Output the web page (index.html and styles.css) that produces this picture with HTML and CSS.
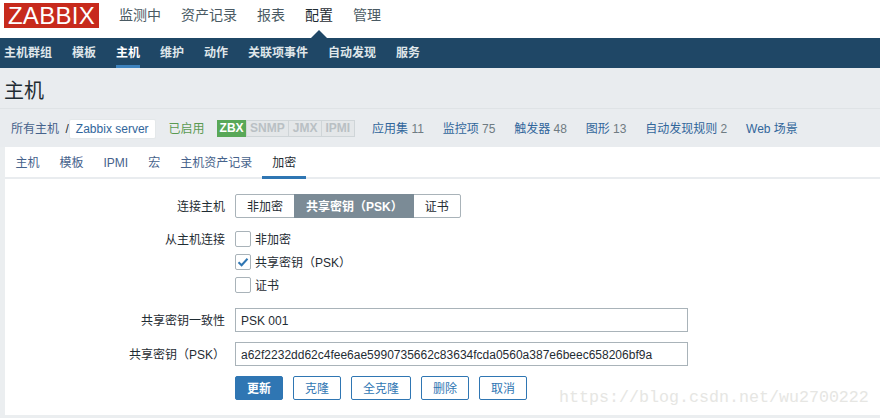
FILE: index.html
```html
<!DOCTYPE html>
<html lang="zh">
<head>
<meta charset="utf-8">
<title>Zabbix</title>
<link rel="stylesheet" href="styles.css">
</head>
<body>
<header class="topbar">
  <div class="logo">ZABBIX</div>
  <nav class="mainnav">
    <a>监测中</a><a>资产记录</a><a>报表</a><a class="on">配置</a><a>管理</a>
  </nav>
</header>
<nav class="subnav">
  <a>主机群组</a><a>模板</a><a class="on">主机</a><a>维护</a><a>动作</a><a>关联项事件</a><a>自动发现</a><a>服务</a>
</nav>
<h1 class="title">主机</h1>
<div class="crumbs">
  <a class="all">所有主机</a><span class="sep">/</span><a class="cur">Zabbix server</a>
  <span class="enabled">已启用</span>
  <div class="badges"><span class="b zbx">ZBX</span><span class="b">SNMP</span><span class="b">JMX</span><span class="b">IPMI</span></div>
  <a class="lnk first">应用集 <i>11</i></a><a class="lnk">监控项 <i>75</i></a><a class="lnk">触发器 <i>48</i></a><a class="lnk">图形 <i>13</i></a><a class="lnk">自动发现规则 <i>2</i></a><a class="lnk">Web 场景</a>
</div>
<main class="panel">
  <div class="tabs">
    <a>主机</a><a>模板</a><a>IPMI</a><a>宏</a><a>主机资产记录</a><a class="on">加密</a>
  </div>
  <form class="form">
    <div class="row r-conn">
      <label class="lab">连接主机</label>
      <div class="seg"><span>非加密</span><span class="sel">共享密钥（PSK）</span><span>证书</span></div>
    </div>
    <div class="row r-from">
      <label class="lab">从主机连接</label>
      <div class="checks">
        <div class="chk"><span class="box"></span>非加密</div>
        <div class="chk"><span class="box"><svg width="14" height="14" viewBox="0 0 14 14"><path d="M2.5 7.2 5.6 10.2 11.5 3.8" fill="none" stroke="#2f76b3" stroke-width="2"/></svg></span>共享密钥（PSK）</div>
        <div class="chk"><span class="box"></span>证书</div>
      </div>
    </div>
    <div class="row r-id">
      <label class="lab">共享密钥一致性</label>
      <div class="input">PSK 001</div>
    </div>
    <div class="row r-key">
      <label class="lab">共享密钥（PSK）</label>
      <div class="input">a62f2232dd62c4fee6ae5990735662c83634fcda0560a387e6beec658206bf9a</div>
    </div>
    <div class="row r-btn">
      <span class="lab"></span>
      <div class="btns"><span class="btn pri">更新</span><span class="btn">克隆</span><span class="btn w">全克隆</span><span class="btn">删除</span><span class="btn">取消</span></div>
    </div>
  </form>
  <div class="mark">https://blog.csdn.net/wu2700222</div>
</main>
</body>
</html>
```
FILE: styles.css
```css
* { box-sizing: border-box; }
html, body { margin: 0; height: 418px; overflow: hidden; }
body {
  background: #ebeef0;
  font: 12px/14px "Liberation Sans", "Noto Sans CJK SC", sans-serif;
  color: #1f2c33;
}
.topbar { height: 38px; background: #fff; display: flex; align-items: flex-start; }
.logo {
  margin: 3px 0 0 4px; width: 95px; height: 25px; background: #c72a1c; color: #fff;
  font-size: 24px; line-height: 26px; text-align: center; letter-spacing: .3px;
}
.mainnav { display: flex; gap: 20px; margin-left: 20px; padding-top: 7px; font-size: 14px; line-height: 16px; color: #4a5a63; }
.mainnav a { position: relative; }
.mainnav .on { color: #1f2c33; }
.mainnav .on::after {
  content: ""; position: absolute; left: 6px; top: 23px; border: 8px solid transparent;
  border-top: 0; border-bottom-color: #1f4766;
}
.subnav { height: 30px; background: #1f4766; display: flex; gap: 20px; padding-left: 4px; color: #dfe6ea; font-weight: 700; line-height: 30px; }
.subnav a { height: 30px; }
.subnav .on { color: #fff; box-shadow: inset 0 -3px 0 #3d82bd; }
.title { margin: 0; height: 41px; padding: 11px 0 0 4px; font-size: 20px; line-height: 24px; font-weight: 400; color: #1f2c33; border-bottom: 1px solid #dfe3e6; background: #e9ecef; }
.crumbs { height: 38px; display: flex; align-items: center; padding: 1px 0 0 11px; color: #31669b; background: #e9ecef; }
.crumbs .all { color: #46628b; }
.sep { margin: 0 0 0 6.5px; color: #1f2c33; }
.cur { background: #fff; border: 1px solid #e4e8ea; border-radius: 2px; padding: 2px 6px; height: 20px; }
.enabled { color: #5a9a52; margin-left: 13px; }
.badges { display: flex; margin-left: 12px; height: 17px; }
.b { border: 1px solid #cfd5d8; background: #e4e7e9; color: #b9c0c4; font-weight: 700; font-size: 12px; line-height: 15px; padding: 0 3.5px; margin-left: -1px; }
.b:first-child { margin-left: 0; }
.b.zbx { background: #59a858; border-color: #59a858; color: #fff; padding: 0 2px; }
.lnk { margin-left: 18.8px; }
.lnk.first { margin-left: 17.5px; }
.lnk i { font-style: normal; color: #6f7b82; }
.panel { position: relative; margin-left: 5px; height: 268px; background: #fff; }
.tabs { height: 32px; display: flex; gap: 20px; padding-left: 10.5px; border-bottom: 2px solid #e9ecef; line-height: 33px; color: #46628b; }
.tabs a { height: 32px; }
.tabs .on { color: #1f2c33; position: relative; }
.tabs .on::after { content: ""; position: absolute; left: -10px; right: -10px; bottom: 0; height: 3px; background: #2f76b3; }
.form { padding-top: 15px; }
.row { display: flex; gap: 10px; }
.lab { width: 220px; height: 24px; text-align: right; flex: none; color: #1f2c33; line-height: 26px; }
.seg { display: flex; height: 24px; border: 1px solid #a9b3b9; border-radius: 2px; line-height: 24px; }
.seg span { padding: 0 11px; }
.seg .sel { background: #7b8b96; color: #fff; font-weight: 700; margin: -1px 0; padding: 0 11px 0 12px; line-height: 26px; height: 24px; }
.r-from { margin-top: 13px; }
.r-from .lab { height: 16px; line-height: 18px; }
.checks { display: flex; flex-direction: column; gap: 7px; }
.chk { display: flex; align-items: flex-start; gap: 4px; height: 16px; line-height: 18px; }
.box { width: 16px; height: 16px; border: 1px solid #a9b3b9; border-radius: 2px; display: block; }
.box svg { display: block; }
.r-id { margin-top: 15px; }
.r-key { margin-top: 10px; }
.input { width: 453px; height: 24px; border: 1px solid #a9b3b9; padding: 0 5px; line-height: 24px; color: #1f2c33; }
.r-btn { margin-top: 10px; }
.btns { display: flex; gap: 10px; }
.btn { width: 48px; height: 24px; border: 1px solid #2f76b3; border-radius: 2px; color: #2f76b3; text-align: center; line-height: 24px; }
.btn.w { width: 60px; }
.btn.pri { background: #2f76b3; color: #fff; font-weight: 700; }
.mark { position: absolute; left: 554px; top: 241px; font: 16.67px/20px "Liberation Mono", monospace; color: #e6e6e3; white-space: nowrap; }
```
